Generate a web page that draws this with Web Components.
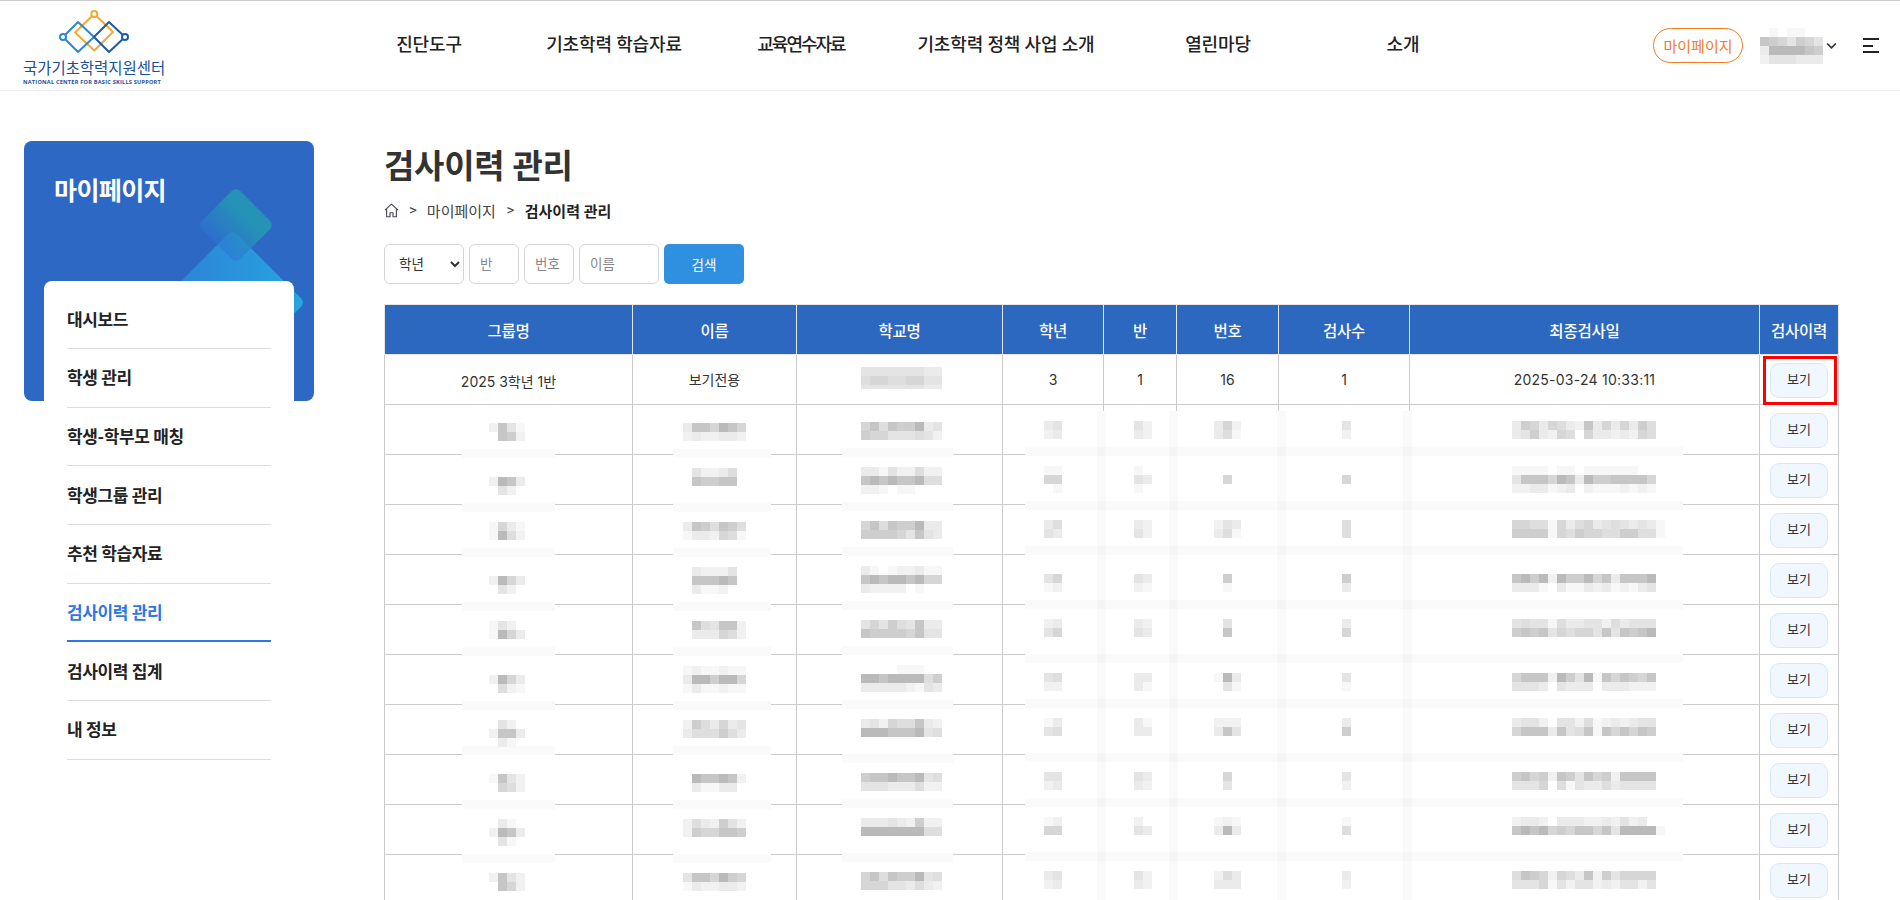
<!DOCTYPE html>
<html lang="ko">
<head>
<meta charset="utf-8">
<title>검사이력 관리</title>
<style>
  html, body { margin: 0; height: 900px; overflow: hidden; background: #fff; }
  body { font-family: Roboto, "Noto Sans CJK KR", sans-serif; color: #333; border-top: 1px solid #ccc; box-sizing: border-box; }
  .page { display: flex; align-items: flex-start; }
</style>
</head>
<body>
<site-header></site-header>
<div class="page">
  <side-menu>
    <side-item>대시보드</side-item>
    <side-item>학생 관리</side-item>
    <side-item>학생-학부모 매칭</side-item>
    <side-item>학생그룹 관리</side-item>
    <side-item>추천 학습자료</side-item>
    <side-item active>검사이력 관리</side-item>
    <side-item>검사이력 집계</side-item>
    <side-item>내 정보</side-item>
  </side-menu>
  <history-page></history-page>
</div>

<script>
const SHADES = ["transparent", "#f7f7f7", "#f1f1f1", "#ebebeb", "#e4e4e4", "#dedede", "#d6d6d6", "#cecece", "#c6c6c6", "#bababa"];

// pixelated cover over hidden text, cells="2841/0872" -> one digit per 9px block
class PxBlur extends HTMLElement {
  connectedCallback() {
    const lines = this.getAttribute("cells").split("/");
    const blocks = lines.map(line => [...line].map(d =>
      `<i style="background:${SHADES[+d]}"></i>`).join("")).join("");
    this.attachShadow({ mode: "open" });
    this.shadowRoot.innerHTML = `
    <style>
      :host { display: inline-grid; grid-template-columns: repeat(${lines[0].length}, 9px); grid-auto-rows: 9px; vertical-align: top; }
      i { display: block; }
    </style>${blocks}`;
  }
}
customElements.define("px-blur", PxBlur);

class SiteHeader extends HTMLElement {
  constructor() {
    super();
    const menus = ["진단도구", "기초학력 학습자료", "교육연수자료", "기초학력 정책 사업 소개", "열린마당", "소개"];
    this.attachShadow({ mode: "open" });
    this.shadowRoot.innerHTML = `
    <style>
      :host { display: flex; align-items: center; height: 90px; box-sizing: border-box; border-bottom: 1px solid #eee; padding: 0 21px 0 23px; }
      .logo { width: 313px; flex: none; display: flex; flex-direction: column; align-items: flex-start; color: #1b4f9e; }
      .logo svg { display: block; width: 78px; height: 50px; margin: 3px 0 0 32px; }
      .ko { font-size: 15.5px; line-height: 17px; letter-spacing: -.05px; margin-top: 3px; white-space: nowrap; }
      .en { font-size: 5.6px; line-height: 8px; font-weight: 700; letter-spacing: .22px; white-space: nowrap; font-family: "Open Sans", sans-serif; }
      nav { display: grid; grid-template-columns: 186px 184px 190px 220px 204px 166px; margin-top: -5px; }
      nav a { text-align: center; font-size: 18px; font-weight: 500; color: #222; letter-spacing: -.15px; white-space: nowrap; }
      nav a:nth-child(3) { letter-spacing: -2px; }
      .right { margin-left: auto; display: flex; align-items: center; }
      .mypage { width: 90px; height: 35px; box-sizing: border-box; border: 1px solid #f57c1f; border-radius: 18px; color: #f57c1f; font-size: 15px; display: flex; align-items: center; justify-content: center; margin-right: 17px; }
      .chev { width: 11px; height: 8px; margin-left: 3px; display: block; }
      .burger { width: 16px; margin-left: 26px; display: flex; flex-direction: column; gap: 4.5px; }
      .burger i { display: block; height: 2px; background: #222; }
      .burger i:nth-child(2) { width: 10px; }
    </style>
    <div class="logo">
      <svg viewBox="55 4 78 50" fill="none" stroke-width="2" stroke-linejoin="round">
        <path d="M94.3 10 75 28.5 94.3 46.5 113 28Z" stroke="#f0aa35"/>
        <path d="M63 33 78 18 94 33 78 48Z" stroke="#2f86d6"/>
        <path d="M94 33 109 18 125 33 109 48Z" stroke="#1c5ba8"/>
        <circle cx="94.3" cy="10" r="3" fill="#fff" stroke="#f0aa35"/>
        <circle cx="63" cy="33" r="3" fill="#fff" stroke="#2f86d6"/>
        <circle cx="125" cy="33" r="3" fill="#fff" stroke="#1c5ba8"/>
      </svg>
      <div class="ko">국가기초학력지원센터</div>
      <div class="en">NATIONAL CENTER FOR BASIC SKILLS SUPPORT</div>
    </div>
    <nav>${menus.map(m => `<a>${m}</a>`).join("")}</nav>
    <div class="right">
      <div class="mypage">마이페이지</div>
      <px-blur cells="0101100/8764764/3999987/2444333"></px-blur>
      <svg class="chev" viewBox="0 0 10 7" fill="none" stroke="#2b3240" stroke-width="1.5"><path d="M1 1.2 5 5.2 9 1.2"/></svg>
      <div class="burger"><i></i><i></i><i></i></div>
    </div>
    `;
  }
}
customElements.define("site-header", SiteHeader);

class SideItem extends HTMLElement {
  constructor() {
    super();
    this.attachShadow({ mode: "open" });
    this.shadowRoot.innerHTML = `
    <style>
      :host { display: flex; align-items: center; height: 58.67px; box-sizing: border-box; padding-bottom: 2px; border-bottom: 1px solid #ddd; font-size: 17px; font-weight: 700; color: #222; letter-spacing: -.4px; }
      :host([active]) { color: #2b77e5; border-bottom: 2px solid #2b77e5; }
    </style>
    <slot></slot>
    `;
  }
}
customElements.define("side-item", SideItem);

class SideMenu extends HTMLElement {
  constructor() {
    super();
    this.attachShadow({ mode: "open" });
    this.shadowRoot.innerHTML = `
    <style>
      :host { display: block; position: relative; width: 384px; flex: none; height: 760px; box-sizing: border-box; padding: 50px 0 0 24px; }
      .card { position: relative; width: 290px; height: 260px; border-radius: 8px; background: #2d68c4; overflow: hidden; box-sizing: border-box; padding: 35px 30px; }
      h2 { margin: 0; font-size: 25px; line-height: 32px; font-weight: 700; color: #fff; letter-spacing: -.6px; }
      .d1, .d2 { position: absolute; transform: rotate(45deg); border-radius: 6px; }
      .d1 { left: 184.7px; top: 57px; width: 54px; height: 54px; background: linear-gradient(to top, rgba(45,115,215,.55), #2593b6 75%); }
      .d2 { left: 156.8px; top: 109.5px; width: 103px; height: 103px; background: linear-gradient(to top right, #2e7fd6, #27a5e0); }
      .shade { position: absolute; left: 44px; top: 190px; width: 250px; height: 229px; box-shadow: 0 0 22px rgba(0,0,0,.09); clip-path: inset(-40px -40px 0 -40px); -webkit-mask-image: linear-gradient(#000 70%, transparent); mask-image: linear-gradient(#000 70%, transparent); }
      .list { position: absolute; left: 44px; top: 190px; width: 250px; box-sizing: border-box; padding: 9.5px 23px 0; background: #fff; border-radius: 8px; }
    </style>
    <div class="card">
      <h2>마이페이지</h2>
      <div class="d2"></div>
      <div class="d1"></div>
    </div>
    <div class="shade"></div>
    <div class="list"><slot></slot></div>
    `;
  }
}
customElements.define("side-menu", SideMenu);

class ViewButton extends HTMLElement {
  constructor() {
    super();
    this.attachShadow({ mode: "open" });
    this.shadowRoot.innerHTML = `
    <style>
      :host { display: flex; align-items: center; justify-content: center; width: 58px; height: 35px; box-sizing: border-box; border: 1px solid #d6e7fc; border-radius: 9px; background: #f1f7ff; font-size: 13px; color: #333; margin: 0 auto; line-height: 20px; }
    </style>
    보기
    `;
  }
}
customElements.define("view-button", ViewButton);

class FilterBar extends HTMLElement {
  constructor() {
    super();
    this.attachShadow({ mode: "open" });
    this.shadowRoot.innerHTML = `
    <style>
      :host { display: flex; gap: 5px; height: 40px; }
      select, input { box-sizing: border-box; height: 40px; border: 1px solid #d5d5d5; border-radius: 6px; background: #fff; font: 13.5px Roboto, "Noto Sans CJK KR", sans-serif; color: #333; outline: none; }
      select { width: 80px; padding: 0 0 0 10px; }
      input { padding: 0 10px; }
      input::placeholder { color: #888; opacity: 1; }
      .s { width: 50px; }
      .m { width: 80px; }
      button { width: 80px; height: 40px; border: 0; border-radius: 5px; background: #2f8fe0; color: #fff; font: 13.5px Roboto, "Noto Sans CJK KR", sans-serif; }
    </style>
    <select><option>학년</option></select>
    <input class="s" placeholder="반">
    <input class="s" placeholder="번호">
    <input class="m" placeholder="이름">
    <button>검색</button>
    `;
  }
}
customElements.define("filter-bar", FilterBar);

// top offset of each cover inside its row, then the block rows
const ROWS = [
  [[18,"2841/0872"],[18,"3886986/2322332"],[17,"685877934/766444542"],[16,"34/23"],[16,"42/32"],[16,"362/351"],[16,"4/2"],[16,"3763653283636375/3473265063323265"]],
  [[22,"2983/0420"],[13,"0422350/0877880"],[12,"331422522/898988955/221011000"],[11,"11/66/01"],[11,"10/43/10"],[20,"6"],[20,"6"],[11,"1111011011111100/4888698397788886/2233123021112121"]],
  [[17,"1631/1952"],[17,"3875875/1332651"],[16,"685877933/777764843"],[15,"35/43"],[15,"32/42"],[15,"243/351"],[15,"5/5"],[15,"66551635634543431/77771657665577551"]],
  [[21,"2963/0420"],[12,"0322240/0888980/0311200"],[11,"310122311/898998966/322220100"],[19,"46/12"],[19,"43/21"],[19,"7/1"],[19,"7/3"],[19,"8979297796838889/3331031132312134"]],
  [[16,"1420/1963"],[16,"0854882/0333652"],[15,"464754833/877776844"],[14,"23/46"],[14,"32/43"],[14,"4/8"],[14,"3/6"],[14,"4544153344253444/7878465664848789"]],
  [[20,"2963/0521"],[11,"1211211/3997996/1311211"],[10,"000011100/998999957/333332143"],[18,"45/22"],[18,"33/31"],[18,"193/041"],[18,"4/1"],[18,"6888297491868768/4443043330333222"]],
  [[15,"0420/2883/0310"],[15,"2753634/3555753"],[14,"342655832/999888945"],[13,"13/45"],[13,"31/33"],[13,"222/384"],[13,"3/7"],[13,"3442044251232344/6888384581868687"]],
  [[19,"1842/0652"],[19,"0988982/0311330"],[18,"788988945/444333522"],[17,"44/23"],[17,"43/32"],[17,"6/4"],[17,"4/2"],[17,"7867287486728888/4446051433534444"]],
  [[14,"0310/2983/0410"],[14,"2532742/2766887"],[13,"333432722/999999955"],[12,"12/66"],[12,"20/43"],[12,"121/393"],[12,"1/5"],[12,"23320333223242300/89896768868499991"]],
  [[18,"2842/0862"],[18,"4886976/1322332"],[17,"685877945/666443532"],[16,"34/23"],[16,"42/32"],[16,"253/333"],[16,"3/2"],[16,"5876265382746666/4446142442324424"]],
];
const COLS = [
  ["그룹명", 248, 104], ["이름", 164, 49.5], ["학교명", 206, 63.5], ["학년", 101, 41],
  ["반", 73, 30], ["번호", 102, 37], ["검사수", 131, 62.5], ["최종검사일", 350, 101.5], ["검사이력", 79, 0],
];

class HistoryTable extends HTMLElement {
  constructor() {
    super();
    const rows = ROWS.map(row => `<tr>${row.map((c, i) => {
      // 한 칸짜리 번호 덮개는 가운데 칸 자리로 민다
      const pad = COLS[i][2] + (i === 5 && c[1].split("/")[0].length === 1 ? 9 : 0);
      return `<td style="padding:${c[0]}px 0 0 ${pad}px;text-align:left;vertical-align:top"><px-blur cells="${c[1]}"></px-blur></td>`;
    }).join("")}<td class="btn"><view-button></view-button></td></tr>`).join("");

    const spots = [];
    const bar = (x, y, w, h, c) => spots.push(`<b style="left:${x - 384}px;top:${y - 304}px;width:${w}px;height:${h}px;background:${c || "#fafafa"}"></b>`);
    const vert = [[1097, 8.5], [1169, 8.5], [1277, 9], [1403, 9]];
    vert.forEach(v => bar(v[0], 411, v[1], 500));
    [449, 503, 548, 602, 647, 701, 746, 800, 854].forEach(y => { bar(462, y, 93, 9); bar(673, y, 98, 9); });
    [448, 502, 547, 601, 646, 700, 754, 799, 853].forEach(y => bar(842, y, 111, 9));
    [447, 501, 546, 600, 654, 699, 753, 798, 852].forEach(y => {
      bar(1025, y, 658, 9);
      vert.forEach(v => bar(v[0], y, v[1], 9, "#f5f5f5"));
    });

    this.attachShadow({ mode: "open" });
    this.shadowRoot.innerHTML = `
    <style>
      :host { display: block; position: relative; width: 1454px; font-size: 14px; color: #333; }
      table { width: 1454px; table-layout: fixed; border-collapse: collapse; }
      th { height: 50px; box-sizing: border-box; padding: 0; background: #2d68c0; color: #fff; font-size: 15.5px; font-weight: 500; border: 1px solid #e6e6e6; letter-spacing: -.2px; }
      td { height: 50px; padding: 0; border: 1px solid #ccc; text-align: center; box-sizing: border-box; line-height: 0; }
      td.t { line-height: 20px; font: 14px/20px Inter, "Noto Sans CJK KR", sans-serif; }
      td.date { letter-spacing: .25px; }
      .btn { position: relative; vertical-align: top; padding-top: 7.5px; }
      .mark { position: absolute; left: 3px; top: 1px; width: 74px; height: 49px; box-sizing: border-box; border: 3px solid #f00; }
      .cover b { position: absolute; display: block; }
      .cover { position: absolute; inset: 0; overflow: hidden; }
      px-blur { position: relative; z-index: 1; }
    </style>
    <table>
      <colgroup>${COLS.map(c => `<col style="width:${c[1]}px">`).join("")}</colgroup>
      <tr>${COLS.map(c => `<th>${c[0]}</th>`).join("")}</tr>
      <tr>
        <td class="t" style="padding-top:5px">2025 3학년 1반</td>
        <td class="t">보기전용</td>
        <td style="padding:12px 0 0 63.5px;text-align:left;vertical-align:top"><px-blur cells="444444433/566556644/444444433" style="height:22px;overflow:hidden"></px-blur></td>
        <td class="t">3</td>
        <td class="t">1</td>
        <td class="t">16</td>
        <td class="t">1</td>
        <td class="t date">2025-03-24 10:33:11</td>
        <td class="btn"><view-button></view-button><div class="mark"></div></td>
      </tr>
      ${rows}
    </table>
    <div class="cover">${spots.join("")}</div>
    `;
  }
}
customElements.define("history-table", HistoryTable);

class HistoryPage extends HTMLElement {
  constructor() {
    super();
    this.attachShadow({ mode: "open" });
    this.shadowRoot.innerHTML = `
    <style>
      :host { display: block; padding-top: 54px; width: 1454px; }
      h1 { margin: 0; font-size: 33px; line-height: 44px; font-weight: 700; color: #333; letter-spacing: -.25px; }
      .crumb { display: flex; align-items: center; height: 20px; margin: 11px 0 24px; font-size: 15px; color: #444; }
      .crumb svg { width: 15px; height: 15px; display: block; margin-right: 10px; }
      .crumb span { margin-right: 10px; }
      .crumb span:nth-of-type(2) { margin-right: 10.5px; }
      .crumb span:nth-of-type(3) { margin-right: 10.5px; }
      .crumb strong { color: #222; font-weight: 700; }
      filter-bar { margin-bottom: 20px; }
    </style>
    <h1>검사이력 관리</h1>
    <div class="crumb">
      <svg viewBox="0 0 16 16" fill="none" stroke="#4a4458" stroke-width="1.2" stroke-linejoin="round"><path d="M1 7.6 8 1.2l7 6.4M2.8 6.2V14.6h3.6V10.4h3.2v4.2h3.6V6.2"/></svg>
      <span>&gt;</span><span>마이페이지</span><span>&gt;</span><strong>검사이력 관리</strong>
    </div>
    <filter-bar></filter-bar>
    <history-table></history-table>
    `;
  }
}
customElements.define("history-page", HistoryPage);
</script>
</body>
</html>
